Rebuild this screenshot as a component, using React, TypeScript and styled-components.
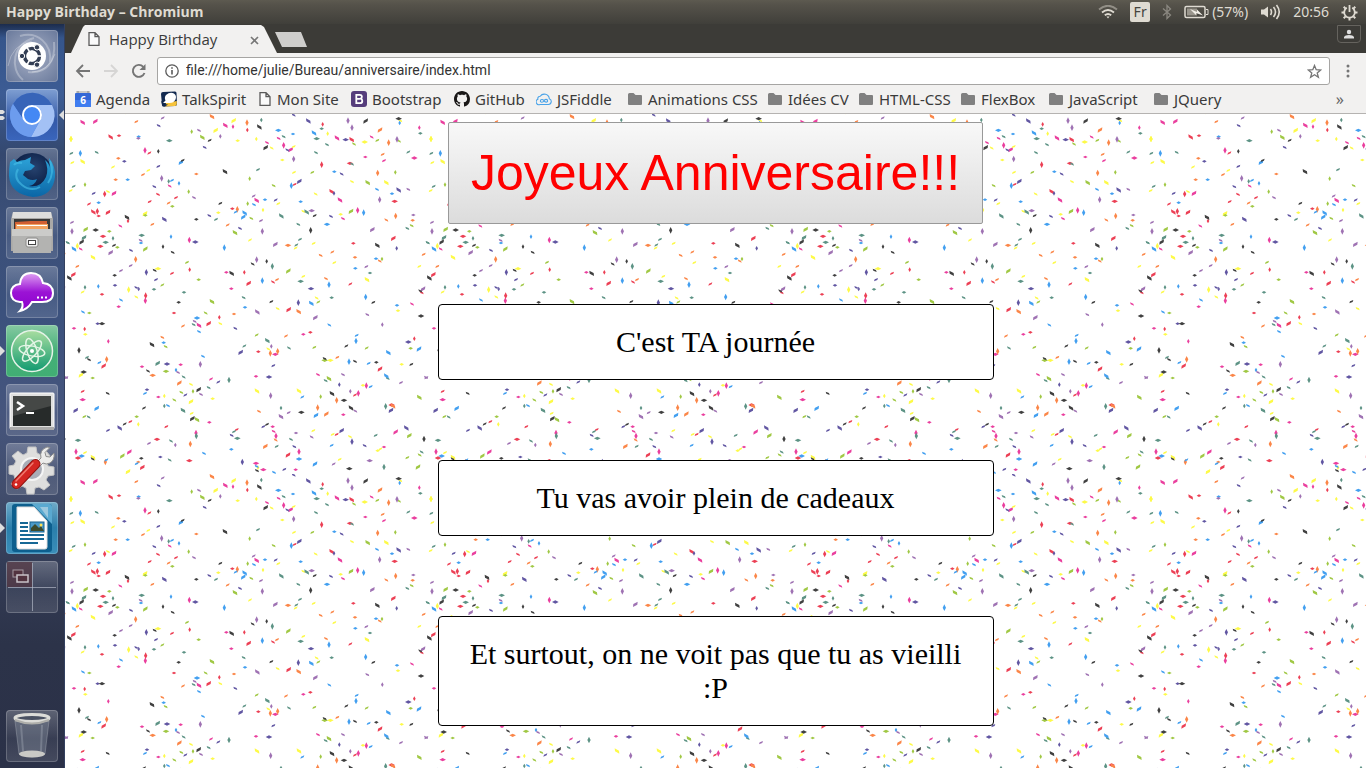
import React from 'react';
import styled, { createGlobalStyle } from 'styled-components';

const uiFont = '"Noto Sans", "Open Sans", sans-serif';

const GlobalStyle = createGlobalStyle`
  *, *::before, *::after { box-sizing: border-box; }
  body { margin: 0; background: #fff; }
  button, input { font: inherit; margin: 0; padding: 0; border: 0; background: none; color: inherit; }
`;

const Desktop = styled.div`
  display: flex;
  flex-direction: column;
  height: 100vh;
  overflow: hidden;
  font-family: ${uiFont};
`;

/* ---------- system panel ---------- */

const Panel = styled.header`
  flex: none;
  display: flex;
  align-items: center;
  justify-content: space-between;
  height: 24px;
  padding: 0 8px 0 6px;
  background: linear-gradient(#5d5a50, #55524a 20%, #403f3a);
  color: #dfdbd2;
  font-size: 14px;
  line-height: 24px;
`;

const WindowTitle = styled.h1`
  margin: 0;
  font-family: "Open Sans", sans-serif;
  font-size: 14px;
  font-weight: 700;
`;

const Indicators = styled.div`
  display: flex;
  align-items: center;
  gap: 12px;
  svg { display: block; }
`;

const Indicator = styled.button`
  display: flex;
  align-items: center;
  gap: 3px;
  height: 24px;
`;

const Keyboard = styled.span`
  width: 20px;
  height: 20px;
  border-radius: 2px;
  background: #dfdbd2;
  color: #45433e;
  font-size: 14px;
  line-height: 20px;
  text-align: center;
`;

const Workspace = styled.div`
  flex: 1;
  min-height: 0;
  display: flex;
`;

/* ---------- launcher ---------- */

const LauncherBar = styled.nav`
  flex: none;
  display: flex;
  flex-direction: column;
  gap: 7px;
  width: 65px;
  padding: 6px 0 6px 6px;
  background: linear-gradient(#1c2c4c, #35558b 14px, #3c5c94 70px, #34486f 130px, #3c5079 200px, #3b517d 290px, #46557d 390px, #414d6c 470px, #333c56 540px, #2c3349 620px, #2b3148);
  border-right: 1px solid #33405f;
`;

const Tile = styled.button<{ $tone?: string; $last?: boolean }>`
  position: relative;
  flex: none;
  width: 52px;
  height: 52px;
  border-radius: 4px;
  background: ${(p) => p.$tone ?? 'linear-gradient(rgba(255,255,255,.24), rgba(255,255,255,.06) 55%, rgba(255,255,255,.12))'};
  box-shadow: inset 0 0 0 1px rgba(255, 255, 255, 0.2);
  margin-top: ${(p) => (p.$last ? 'auto' : '0')};
  svg { display: block; }
`;

const Pip = styled.span<{ $side: 'left' | 'right' }>`
  position: absolute;
  top: 21px;
  ${(p) => (p.$side === 'left' ? 'left: -6px;' : 'right: -6px;')}
`;

/* ---------- browser chrome ---------- */

const Browser = styled.main`
  flex: 1;
  min-width: 0;
  display: flex;
  flex-direction: column;
  color: #3a3a3a;
`;

const TabStrip = styled.div`
  flex: none;
  display: flex;
  align-items: flex-start;
  height: 29px;
  padding: 1px 5px 0 6px;
  background: #3c3b37;
`;

const Tab = styled.div`
  display: flex;
  align-items: center;
  width: 206px;
  height: 28px;
  padding: 0 18px 0 16px;
  background: #f2f1f0;
  clip-path: polygon(0 100%, 12px 2px, 14px 0, 190px 0, 193px 2px, 100% 100%);
  font-size: 15px;
  line-height: 28px;
`;

const TabTitle = styled.span`
  flex: 1;
  margin-left: 8px;
  font-family: "Open Sans", sans-serif;
`;

const NewTab = styled.button`
  width: 32px;
  height: 15px;
  margin: 7px auto 0 -2px;
  background: #cfcecc;
  clip-path: polygon(0 0, 26px 0, 100% 100%, 7px 100%);
`;

const UserButton = styled.button`
  display: grid;
  place-items: center;
  width: 24px;
  height: 18px;
  border: 1px solid #65635e;
  border-radius: 0 0 4px 4px;
`;

const Toolbar = styled.div`
  flex: none;
  display: flex;
  align-items: center;
  height: 36px;
  padding: 0 4px;
  background: #f2f1f0;
`;

const ToolButton = styled.button`
  display: grid;
  place-items: center;
  width: 28px;
  height: 28px;
`;

const AddressBox = styled.label`
  flex: 1;
  display: flex;
  align-items: center;
  gap: 7px;
  height: 28px;
  margin: 0 4px;
  padding: 0 7px;
  border: 1px solid #a6a5a3;
  border-radius: 3px;
  background: #fff;
`;

const AddressInput = styled.input`
  flex: 1;
  min-width: 0;
  height: 26px;
  padding-bottom: 2px;
  outline: 0;
  font-family: Roboto, "Noto Sans", sans-serif;
  font-size: 14px;
  color: #333;
`;

const Bookmarks = styled.nav`
  flex: none;
  display: flex;
  align-items: center;
  height: 25px;
  padding: 0 22px 4px 10px;
  background: #f2f1f0;
  border-bottom: 1px solid #b5b3b1;
  font-size: 15px;
`;

const Bookmark = styled.a<{ $basis: number }>`
  flex: 0 0 ${(p) => p.$basis}px;
  display: flex;
  align-items: center;
  gap: 5px;
  color: inherit;
  text-decoration: none;
  white-space: nowrap;
  line-height: 20px;
  svg { flex: none; }
`;

const More = styled.button`
  margin-left: auto;
  color: #666;
  font-size: 16px;
  line-height: 18px;
`;

/* ---------- web page ---------- */

const Page = styled.section`
  flex: 1;
  min-height: 0;
  display: grid;
  background: #fff;
  > * { grid-area: 1 / 1; }
`;

const ConfettiSheet = styled.svg`
  width: 100%;
  height: 100%;
`;

const Greeting = styled.div`
  display: flex;
  flex-direction: column;
  align-items: center;
  gap: 80px;
  padding: 8px;
  z-index: 1;
`;

const BigButton = styled.button`
  padding: 20px 22px;
  border: 1px solid #999;
  border-radius: 2px;
  background: linear-gradient(#f8f8f8, #dcdcdc);
  color: #f00;
  font-family: "Liberation Sans", Arial, sans-serif;
  font-size: 50px;
  line-height: 60px;
`;

const Message = styled.p`
  box-sizing: content-box;
  width: 40%;
  margin: 0;
  padding: 20px;
  border: 1px solid #000;
  border-radius: 4px;
  background: #fff;
  color: #000;
  font-family: "Liberation Serif", "Times New Roman", serif;
  font-size: 30px;
  line-height: 34px;
  text-align: center;
`;

/* Confetti tile, 1080 units for 360px. Each piece: colour, shape, x, y.
   Shapes: V upright, H flat, F leaning right, B leaning left; lower case is small. */
const PIECES = `
mB50,25 mF88,22 of211,23 pf290,12 oB438,8 yF503,20 oV543,26 tv586,18 kB580,39 ib278,35 mB478,34 mv501,38 yF449,49 gv377,53 pb399,49
yV15,75 rB134,69 rh159,65 bh218,68 ph217,73 tH310,80 gB409,70 kf431,79 pv463,67 ib416,100 yh515,80 rv544,48 mV237,109 rf250,117 kv277,112
tf16,118 bV43,118 tb92,115 yf19,146 yB50,143 oh157,133 ih175,142 bF345,145 kf350,139 yf141,159 yf247,169 if277,157 of231,182 oh391,180 kB477,173
oh149,197 bh185,197 pV287,193 tv308,202 bf318,199 bv339,208 mb311,216 ib265,218 tf23,217 gv57,212 yf14,230 if83,238 rV116,240 yb126,233 mF144,238
rb276,241 gv368,233 rf330,251 pb384,251 rf251,263 of308,267 gh319,277 rf69,270 bh98,266 rB82,294 rV94,292 rF126,295 rh98,306 yF237,299 gh238,304
kB183,310 rv186,321 iB295,316 of259,331 kf463,268 yh457,296 ib430,305 tf450,316 kh391,316 mb163,336 pf18,325 pV18,352 gF59,346 kH89,348 gh130,352
tF54,371 kF47,384 rH111,367 tH119,385 rH103,397 tv141,373 kf144,394 gh154,400 pF134,416 bB24,405 yV34,396 mb44,405 tb5,386 yB81,430 tH227,364
pb224,379 bh225,387 gF238,405 bv315,368 mV370,378 iH388,384 kv291,398 kb320,415 ib195,409 oV209,436 gf363,445 rv371,467 bV475,401 of485,333
of34,457 rF22,482 kB10,492 pf194,455 pf165,470 kh146,484 iV241,475 kb266,469 yH276,464 if270,497 rf318,478 gh398,497 mh481,475 kB497,478
tv57,520 bv97,517 yf50,534 ih147,514 rh108,541 gf289,513 th264,526 yV188,527 ib211,521 iv218,525 rV239,545 mV238,560 yb211,549 bb165,558
mh158,578 th354,535 kh338,565 bb51,594 gh70,597 gB438,563 rh324,597 gb419,597 bH393,612 pb386,622 tb383,632 mB399,634 rF428,629 rv460,610 yb463,629
oh504,600 ib508,643 kH108,629 ih95,629 mh24,643 rv56,645 yh58,661 mv127,682 of351,636 bb399,653 ob289,670 bh293,686 kB258,692 gb299,698
kV39,709 tf63,730 kb69,737 oV122,736 bf100,746 rF113,756 kH53,774 yF45,783 gh80,792 tF275,748 iH303,750 mh344,752 gH300,772 mh228,758 kb246,771
oH260,784 bv330,768 pb336,775 tb353,789 pV403,751 bb411,727 oF340,807 yb375,811 kF398,827 gb346,835 gv381,832 if358,843 pb405,841 tb428,821
mf435,795 if457,804 tV489,798 ih243,827 bf237,838 mh277,849 yv295,846 gb325,858 yF375,863 yh440,854 rf50,832 kb125,838 mH50,857 iF29,889 bF92,883
kf234,882 tv295,876 bb306,875 tB351,889 pf1,791
bH637,49 tb653,68 yv571,75 bh681,60 mb638,73 mb603,86 kF599,101 yb617,102 mV653,94 mF674,107 ib664,108 yf683,98 pV683,135 yh649,138 tf576,167 gv551,194
gb623,215 yf684,175 bV676,215 rf686,211 iF700,202 pf563,246 mB572,259 bh597,257 if629,258 bb564,272 gv545,269 yf637,269 yv591,288 rh499,284 oV514,286
bf509,294 bB536,297 bF532,309 gb556,313 pf585,320 tB646,306 bh704,263 yb712,292 tB722,294 ib522,343 gB507,356 pV589,352 yf552,378 pF628,391
oH666,394 tf691,393 tf702,376 yf689,402 tb697,331 kV734,349 yf743,388 pV572,437 kb560,450 kv602,442 tV619,457 gF667,471 rv535,475 rF548,508
bV589,500 rb621,504 of633,497 mh496,524 tb533,551 bh537,580 pB574,594 kf616,563 yb635,584 rF668,587 oB698,593 iV697,566 yf712,487 tH704,502 iH735,524
iB727,21 rv770,31 th767,44 bB744,57 tH752,74 tb783,92 tb750,116 rV767,152 gf739,175 yb749,240 yv785,59 bh805,173 ib827,180 rB797,233 iv804,238
pV846,20 pV858,41 kF899,21 iH839,77 rB857,77 gb864,90 mB813,72 yH896,84 mb917,69 gf934,79 oF942,48 oV968,86 pV993,76 gb999,81 kH998,14 bv1001,27 yb1003,20
rH852,148 tb858,150 mh898,129 of950,121 mf954,140 oV935,177 gv988,175 gB905,206 yB961,206 yb858,203 iB998,228 bh978,239 bb933,226 pV941,257 rH986,262
mB822,258 pH737,290 kf746,305 ib795,307 yh824,301 mb831,314 bH783,331 gF855,292 mV875,289 bV893,296 oV989,306 ob961,318 pF919,347 rF982,373
kB934,394 iv992,403 rh862,388 of799,414 ob764,424 yf805,446 oh867,430 bh868,463 bh930,434 ob941,441 gv948,435 pf901,458 th912,477 yB903,497
ob780,494 bV789,512 rf853,510 bV899,549 kf922,565 th797,551 yb752,552 gf757,564 bB736,568 pF748,611 bb790,633 bh993,574 yh996,590 pb904,602
pv949,632 rh733,655 mh712,661 of660,666 gf572,663 tB604,680 tf535,696 iF524,715 rh577,713 pv616,697 yb607,705 oV613,718 oV635,712 mH628,721 tb669,702
if622,755 mh570,787 iH609,789 yB573,831 pV614,845 tv645,882 gf745,700 kf841,696 bV870,681 bf872,664 gf902,702 bB967,716 kb776,734
gH776,739 yH793,739 of814,730 bV849,743 kb867,742 bf908,748 kh931,745 rF942,765 bB961,786 tb965,793 mb756,782 gB789,794 tb779,800 pb831,782
iv820,812 mV901,815 yh891,814 bf914,818 mV877,838 rf867,843 pv853,832 kB798,839 oV812,859 kH834,859 yB699,831 bf709,849 gv764,848 oV755,881
kB855,882 pb868,891 tV959,877 rH977,873 oB981,876 iF975,889 kH706,895 ib683,3
mv1060,41 th1063,58 yV1095,75 tf1027,114 mH1045,132 pb1027,226 ph1042,303 oh1040,319 gb1037,335 tb1024,343 tb1085,386 of1073,421 yf1060,457 kb1090,493 pF1071,525 kb1063,531 rb1067,536
mb1038,570 kH1065,606 iH1027,684 rv1045,674 gh1034,703 bF1059,705 yh1007,751 kf1036,751 pf1005,806 pb1080,790 gB1060,850 iB1021,942 gF1030,965 kV1074,975 tb1067,1014
gf55,908 tb68,909 if126,949 iB161,942 kf176,930 rf193,923 gh212,908 yv217,931 rf301,938 yf377,898 kF379,914 gB393,917 mh430,925 ob579,892
pB645,908 pf668,896 bF750,904 oF781,900 mh832,902 kf603,931 if592,938 mh620,938 mb623,952 mV630,966 ob629,978 rf512,947 tf504,953 ib497,964 tH514,973
yf742,950 ph690,957 pb737,969 yf800,961 rf812,961 iF827,950 yb852,968 iV858,983 ib896,995 mF989,954 tf929,964
tH36,979 mV30,1013 yf57,1016 rH36,1032 bH47,1026 yB81,1030 kb80,1035 oV118,1044 bf121,1038 gF169,1026 mF190,1014 pf249,988 rH273,976 tb315,981 pv328,993 mV390,957 tV391,966 oV373,990
bb414,1018 kh226,1033 oh217,1044 bf212,1049 rF229,1060 yF186,1073 ih283,1029 tb311,1038 rH370,1040 bh496,1006 iV529,1044 oF598,997 tf632,997 tb675,976 ib685,998 mV699,1013 rF666,1023 bH699,1035
mH570,1048 yv576,1061 bb572,1057 kb573,1070 mH592,1067 bb624,1075 if655,1066 mh689,1067 bF747,1050 bf797,994 yf821,1036 pf803,1050 kH850,1064 pH911,1040 yh935,1010 yf943,1005 mh954,999 tV954,1059
iB1021,942 gF1030,965 gf1024,1031 gb1061,1023 gF1056,1059
`.trim().split(/\s+/);

const CONFETTI_COLOURS: Record<string, string> = {
  m: '#ea3f9e', r: '#ec4055', o: '#fb8648', y: '#fdfa48', g: '#a0c844',
  t: '#5d9385', b: '#429ff0', i: '#6156a2', p: '#9f72b3', k: '#404040',
};

const SHAPES: Record<string, string> = {
  V: 'm0-10l5 10l-5 10l-5-10z', v: 'm0-7l4 7l-4 7l-4-7z',
  H: 'm-10 0l10-5l10 5l-10 5z', h: 'm-7 0l7-4l7 4l-7 4z',
  F: 'm7-8l-1 9l-13 7l1-9z', f: 'm6-5l-2 6l-10 4l2-6z',
  B: 'm-7-8l1 9l13 7l-1-9z', b: 'm-6-5l2 6l10 4l-2-6z',
};

const confettiPaths = Object.keys(CONFETTI_COLOURS).map((key) => ({
  fill: CONFETTI_COLOURS[key],
  d: PIECES.filter((p) => p[0] === key).map((p) => 'M' + p.slice(2) + SHAPES[p[1]]).join(''),
}));

const Confetti = () => (
  <ConfettiSheet aria-hidden="true">
    <defs>
      <pattern id="confetti" x="1" y="0" width="360" height="360" patternUnits="userSpaceOnUse">
        <g transform="scale(.33333)">
          {[[0, 0], [-1080, 0], [1080, 0], [0, -1080]].map(([x, y]) => (
            <g key={`${x},${y}`} transform={`translate(${x} ${y})`}>
              {confettiPaths.map((c) => <path key={c.fill} fill={c.fill} d={c.d} />)}
            </g>
          ))}
        </g>
      </pattern>
    </defs>
    <rect width="100%" height="100%" fill="url(#confetti)" />
  </ConfettiSheet>
);

/* ---------- drawings ---------- */

const Doc = () => (
  <svg width="14" height="16" viewBox="0 0 14 16" fill="#fafafa" stroke="#5a5a5a" strokeWidth="1.3">
    <path d="M2 1.7h6l4 4v8.6H2zM8 1.7v4h4" />
  </svg>
);

const Folder = () => (
  <svg width="15" height="14" viewBox="0 0 15 14">
    <path d="M0 2.5A1.5 1.5 0 0 1 1.5 1h4l2 2H13a1 1 0 0 1 1 1v8a1 1 0 0 1-1 1H1a1 1 0 0 1-1-1z" fill="#808080" />
  </svg>
);

const Calendar = () => (
  <svg width="16" height="16" viewBox="0 0 16 16">
    <rect x="1" width="14" height="4" fill="#c9c9c9" /><path d="M3 0v2M13 0v2" stroke="#888" />
    <rect y="2" width="16" height="14" rx="1" fill="#3367d6" /><path d="M0 9h16v6a1 1 0 0 1-1 1H1a1 1 0 0 1-1-1z" fill="#3f7df0" />
    <text x="8" y="13" fill="#fff" fontSize="10" fontWeight="700" textAnchor="middle" fontFamily="Open Sans, sans-serif">6</text>
  </svg>
);

const TalkSpirit = () => (
  <svg width="16" height="16" viewBox="0 0 16 16">
    <path d="M2 1L14 .5q1.500 0 1.500 1.500L16 13q0 2-2 2L3 15.500q-2 0-2-2L0 3q0-2 2-2z" fill="#12294f" />
    <path d="M5 12q5-1 10.800-2v3q0 2-2 2L4 15.500z" fill="#f6c33b" />
    <path d="M5 4q4-3.500 8-1.500q3 2 1.500 6q-2 4-7 3.500L2 12l2.500-2.500q-1.500-3 .5-5.500z" fill="#fff" />
    <path d="M0 9.500l3 3.500 4 .5-3 2H2.500Q1 15.500 1 14z" fill="#12294f" />
  </svg>
);

const Bootstrap = () => (
  <svg width="16" height="16" viewBox="0 0 16 16">
    <rect width="16" height="16" rx="3" fill="#563d7c" />
    <path d="M5.300 3.800h3.400q2.200 0 2.200 2q0 1.400-1.300 1.900q1.700.4 1.700 2.200q0 2.300-2.600 2.300H5.300zM5.300 7.800h3.500" fill="none" stroke="#fff" strokeWidth="1.800" />
  </svg>
);

const GitHub = () => (
  <svg width="16" height="16" viewBox="0 0 16 16" fill="#191717">
    <path d="M8 0C3.580 0 0 3.580 0 8c0 3.540 2.290 6.530 5.470 7.590.4.070.55-.17.55-.38 0-.19-.01-.82-.01-1.490-2.010.37-2.530-.49-2.690-.94-.09-.23-.48-.94-.82-1.130-.28-.15-.68-.52-.01-.53.63-.01 1.080.58 1.230.82.72 1.210 1.870.87 2.330.66.07-.52.28-.87.51-1.070-1.780-.2-3.640-.89-3.640-3.950 0-.87.31-1.590.82-2.150-.08-.2-.36-1.020.08-2.120 0 0 .67-.21 2.200.82.64-.18 1.320-.27 2-.27s1.360.09 2 .27c1.530-1.040 2.200-.82 2.200-.82.44 1.100.16 1.920.08 2.120.51.56.82 1.270.82 2.150 0 3.070-1.870 3.750-3.650 3.950.29.25.54.73.54 1.480 0 1.070-.01 1.930-.01 2.200 0 .21.15.46.55.38A8 8 0 0 0 16 8c0-4.420-3.580-8-8-8z" />
  </svg>
);

const JSFiddle = () => (
  <svg width="16" height="14" viewBox="0 0 16 14" fill="none" stroke="#4aa3e8" strokeWidth="1.100">
    <path d="M4 12.500h8.500a3 3 0 0 0 .8-5.800A5 5 0 0 0 4.200 4.300a2.300 2.300 0 0 0-2.300 3A2.800 2.800 0 0 0 4 12.500z" />
    <path d="M8 8.700c-1-1.600-3.600-1.600-3.600.2s2.600 1.800 3.600-.2s3.600-1.600 3.600.2s-2.600 1.600-3.600-.2z" />
  </svg>
);

const bookmarks = [
  { label: 'Agenda', icon: <Calendar />, basis: 86 },
  { label: 'TalkSpirit', icon: <TalkSpirit />, basis: 97 },
  { label: 'Mon Site', icon: <Doc />, basis: 93 },
  { label: 'Bootstrap', icon: <Bootstrap />, basis: 103 },
  { label: 'GitHub', icon: <GitHub />, basis: 82 },
  { label: 'JSFiddle', icon: <JSFiddle />, basis: 92 },
  { label: 'Animations CSS', icon: <Folder />, basis: 140 },
  { label: 'Idées CV', icon: <Folder />, basis: 91 },
  { label: 'HTML-CSS', icon: <Folder />, basis: 102 },
  { label: 'FlexBox', icon: <Folder />, basis: 88 },
  { label: 'JavaScript', icon: <Folder />, basis: 105 },
  { label: 'JQuery', icon: <Folder />, basis: 80 },
];

const Art = ({ children }: { children: React.ReactNode }) => (
  <svg width="52" height="52" viewBox="0 0 52 52" aria-hidden="true">{children}</svg>
);

const Dash = () => (
  <Art>
    <g fill="none" stroke="#fff" strokeOpacity=".28">
      <path d="M17 50C3 38 7 14 28 8M48 12c2 20-8 32-26 30M14 6c18-5 32 8 30 26" strokeWidth="2" />
      <path d="M2 36Q6 14 26 11M49 24Q42 42 26 42" />
    </g>
    <circle cx="26" cy="26" r="14" fill="#fff" />
    <circle cx="26" cy="26" r="7.500" fill="none" stroke="#333e54" strokeWidth="3.500" />
    <path d="M26 26h11M26 26l-5.500-9.500M26 26l-5.500 9.500" stroke="#fff" strokeWidth="1.500" />
    <circle cx="26" cy="26" r="5.500" fill="#fff" />
    <g fill="#333e54" stroke="#fff" strokeWidth="1"><circle cx="16" cy="26" r="2.700" /><circle cx="31" cy="17.300" r="2.700" /><circle cx="31" cy="34.700" r="2.700" /></g>
  </Art>
);

const Chromium = () => (
  <Art>
    <circle cx="26" cy="26" r="22" fill="#5c8ee6" />
    <path d="M7 15A22 22 0 0 1 46 16H26a10 10 0 0 0-9 14z" fill="#3764b8" />
    <path d="M46 16A22 22 0 0 1 25 48L35 30a10 10 0 0 0-9-14z" fill="#a3c1f5" />
    <path d="M7 15A22 22 0 0 0 25 48l8-15a10 10 0 0 1-16-3z" fill="#6c9cee" />
    <circle cx="26" cy="26" r="9" fill="#4488f4" stroke="#fff" strokeWidth="2" />
  </Art>
);

const Firefox = () => (
  <Art>
    <defs>
      <radialGradient id="fx" cx=".55" cy=".35"><stop offset="0" stopColor="#27436f" /><stop offset="1" stopColor="#0a1d44" /></radialGradient>
      <linearGradient id="fox" x1="0" y1="0" x2="0" y2="1"><stop offset="0" stopColor="#2da3d8" /><stop offset="1" stopColor="#0b66a6" /></linearGradient>
    </defs>
    <circle cx="26" cy="26" r="21" fill="url(#fx)" />
    <path d="M4 14L8 11l3 3q4-2 8-2l6-3-1 6 5 3-4 4-6 1-2 4 5 4q5 2 9 0-2 6-8 7 12 2 17-9 3-8-1-17 4 3 5 8l-1-10q7 9 6 19-2 19-22 20Q4 46 3 28 3 20 4 14z" fill="url(#fox)" />
    <path d="M12 21q-5 9 4 16t18 2M44 13q5 12-2 22M8 17q2-3 8-2" fill="none" stroke="#48bfe8" strokeWidth="2" strokeOpacity=".6" />
  </Art>
);

const Files = () => (
  <Art>
    <path d="M7 5h38l2 7v32H5V12z" fill="#aaa9a7" /><path d="M7 5h38l1 6H6z" fill="#dededd" />
    <path d="M8 12h36v12H8z" fill="#393939" /><path d="M9 15l16-1 16 0v8H9z" fill="#d15e32" /><path d="M10 17h32v7H10z" fill="#f1a462" /><path d="M11 18.500h30" stroke="#fff" />
    <path d="M6 22h40l-1 24H7z" fill="#b3b3b1" /><path d="M6 22h40v7H6z" fill="#cbcbc9" />
    <rect x="20" y="31" width="12" height="9" rx="2" fill="#eee" stroke="#8b8a88" /><rect x="22.500" y="33.500" width="7" height="4" fill="#fff" stroke="#444" />
  </Art>
);

const Chat = () => (
  <Art>
    <defs>
      <linearGradient id="cloud" x1="0" y1="0" x2="0" y2="1"><stop offset="0" stopColor="#dfa0f2" /><stop offset=".5" stopColor="#9b13d5" /><stop offset="1" stopColor="#8c00cd" /></linearGradient>
    </defs>
    <path d="M14 36Q5 35 5 27t9-9q1-11 11-11 10 0 12 10 10 1 10 10 0 9-11 9H26q-4 7-12 9 4-4 2-9z" fill="url(#cloud)" stroke="#fff" strokeWidth="2" />
    <path d="M31 31.500h2M35 31.500h2M39 31.500h2" stroke="#fff" strokeWidth="2" />
  </Art>
);

const Atom = () => (
  <Art>
    <defs>
      <linearGradient id="atom" x1="0" y1="0" x2="0" y2="1"><stop offset="0" stopColor="#a8dda0" /><stop offset="1" stopColor="#119a70" /></linearGradient>
    </defs>
    <circle cx="26" cy="26" r="20.500" fill="url(#atom)" stroke="#e6f3e8" strokeWidth="1.500" />
    <g fill="none" stroke="#e4f5e6" strokeWidth="1.500">
      <ellipse cx="26" cy="26" rx="13" ry="5" transform="rotate(12 26 26)" />
      <ellipse cx="26" cy="26" rx="13" ry="5" transform="rotate(72 26 26)" />
      <ellipse cx="26" cy="26" rx="13" ry="5" transform="rotate(-48 26 26)" />
    </g>
    <circle cx="26" cy="26" r="2" fill="#fff" />
  </Art>
);

const Terminal = () => (
  <Art>
    <rect x="4" y="9" width="44" height="36" rx="1" fill="#e0e0df" stroke="#fff" /><rect x="4" y="43" width="44" height="3" fill="#aaa" />
    <rect x="7" y="12" width="38" height="30" fill="#272b2a" /><path d="M7 12h38v10L7 32z" fill="#454846" />
    <path d="M11 18l6 4-6 4" fill="none" stroke="#fff" strokeWidth="2.500" /><path d="M20 29h8" stroke="#fff" strokeWidth="2" />
  </Art>
);

const Settings = () => (
  <Art>
    <path d="M22 4h8l1 6 4 2 5-4 5 6-4 5 1 4 6 1v8l-6 1-2 4 4 5-6 5-5-3-4 1-1 6h-7l-1-6-4-2-5 3-6-5 4-5-1-4-5-1v-8l5-1 2-4-4-5 6-5 5 4 4-2z" fill="#dededd" stroke="#c4c4c4" />
    <circle cx="26" cy="26" r="11" fill="#a9adb7" stroke="#f5f5f5" strokeWidth="2" />
    <path d="M28 22l7-7q-2-8 6-11l3 .5-5 5 1 4 4 .5 4-4q1 7-4 10-4 2-7 0l-6 6z" fill="#ececeb" stroke="#8d8d8d" />
    <path d="M9 41L28 21" stroke="#8f1412" strokeWidth="10" strokeLinecap="round" transform="translate(1.500 0)" />
    <path d="M9 41L28 21" stroke="#d42622" strokeWidth="8" strokeLinecap="round" transform="translate(1.500 0)" />
    <path d="M10 38l17-18" stroke="#f07a70" strokeWidth="1.500" strokeLinecap="round" />
    <circle cx="10" cy="41.500" r="1.300" fill="#fff" />
  </Art>
);

const Writer = () => (
  <Art>
    <rect x="6" y="2" width="40" height="48" rx="3" fill="#0d5f8e" /><path d="M26 2h17q3 0 3 3v17z" fill="#5aa9d0" />
    <path d="M11 5h17l13 14v26q0 2-2 2H13q-2 0-2-2z" fill="#fff" stroke="#dedede" /><path d="M34 5h8v11z" fill="#9cc8de" />
    <g stroke="#176895" strokeWidth="2"><path d="M14 21h8M14 25h8M14 29h8M14 33h24M14 37h24M14 41h18" /></g>
    <rect x="24" y="20" width="14" height="10" fill="#4a99c8" stroke="#17608c" /><path d="M25 29v-3l4-4 4 4 2-2 3 5z" fill="#3d4a2c" /><circle cx="35" cy="23" r="1.500" fill="#fde050" />
  </Art>
);

const Switcher = () => (
  <Art>
    <path d="M1 1h25v25H1z" fill="#52333f" fillOpacity=".7" />
    <path d="M26.500 2v48M2 26.500h48" stroke="#b9bfcc" strokeOpacity=".65" />
    <g fill="#52333f" stroke="#c9c3c9"><rect x="7" y="9" width="10" height="7" strokeOpacity=".7" /><rect x="11" y="14" width="11" height="7" strokeWidth="1.500" /></g>
  </Art>
);

const Trash = () => (
  <Art>
    <path d="M9 11l4 33q13 6 26 0l4-33z" fill="#7f8897" fillOpacity=".45" stroke="#aab0ba" strokeOpacity=".4" />
    <ellipse cx="26" cy="44" rx="13" ry="3.500" fill="#c9c9c5" /><path d="M15 15l2 26M36 15l-1 26" stroke="#b9c0ca" strokeOpacity=".3" strokeWidth="2" />
    <ellipse cx="26" cy="8" rx="17" ry="3.500" fill="#4a5162" stroke="#dcdcd8" strokeWidth="3" /><path d="M9 10q17 7 34 0" fill="none" stroke="#aeaeaa" strokeWidth="2" />
  </Art>
);

const launcherItems: { name: string; art: React.ReactNode; tone?: string; left?: number; right?: boolean; last?: boolean }[] = [
  { name: 'Dash', art: <Dash />, tone: 'radial-gradient(#a7b0c6, #68789a)' },
  { name: 'Chromium', art: <Chromium />, tone: 'linear-gradient(#7f9fd2, #3359a8 60%, #3a66bd)', left: 2, right: true },
  { name: 'Firefox', art: <Firefox /> },
  { name: 'Files', art: <Files /> },
  { name: 'Messages', art: <Chat /> },
  { name: 'Atom', art: <Atom />, tone: 'linear-gradient(#86c9a2, #45b078 50%, #41ae74)', left: 1 },
  { name: 'Terminal', art: <Terminal /> },
  { name: 'System Settings', art: <Settings /> },
  { name: 'Writer', art: <Writer />, tone: 'linear-gradient(#70abc9, #2a7eab 50%, #3b8fba)', left: 1 },
  { name: 'Workspaces', art: <Switcher /> },
  { name: 'Trash', art: <Trash />, last: true },
];

const Wifi = () => (
  <svg width="20" height="14" viewBox="0 0 20 14" fill="none" stroke="#dfdbd2" strokeWidth="1.800">
    <path d="M1 4.500q9-7.500 18 0" strokeOpacity=".45" /><path d="M4 7.500q6-5 12 0M6.800 10.300q3.200-2.600 6.400 0" /><path d="M8.500 11.500h3L10 13.500z" fill="#dfdbd2" stroke="none" />
  </svg>
);

const Bluetooth = () => (
  <svg width="10" height="16" viewBox="0 0 10 16" fill="none" stroke="#8b8881" strokeWidth="1.300"><path d="M1 4.500l7.500 6.500L5 14.500v-13L8.500 5 1 11.500" /></svg>
);

const Battery = () => (
  <svg width="25" height="14" viewBox="0 0 25 14">
    <rect x="1" y="1.500" width="20" height="11" rx="1.500" fill="none" stroke="#dfdbd2" strokeWidth="1.500" /><path d="M22 4.500h2v5h-2" fill="none" stroke="#dfdbd2" />
    <rect x="3" y="3.500" width="10" height="7" fill="#99958c" /><path d="M6 4l7 3V4.500l6 6-7-2.500V10z" fill="#f2efe8" />
  </svg>
);

const Sound = () => (
  <svg width="21" height="16" viewBox="0 0 21 16" fill="none" stroke="#dfdbd2" strokeWidth="1.600">
    <path d="M1 5.500h3l4-3v11l-4-3H1z" fill="#dfdbd2" stroke="none" /><path d="M10.500 5q2 3 0 6M13.500 3q4 5 0 10M16.500 1q5.500 7 0 14" />
  </svg>
);

const Session = () => (
  <svg width="17" height="17" viewBox="0 0 17 17" fill="none" stroke="#dfdbd2">
    <path d="M5.800 3.800a5.300 5.300 0 1 0 5.400 0" strokeWidth="1.800" /><path d="M8.500 1v7" strokeWidth="1.800" />
    <path d="M.5 8.500h2.500M14 8.500h2.500M2.700 2.700l1.900 1.900M14.300 2.700l-1.900 1.900M2.700 14.300l1.900-1.900M14.300 14.300l-1.900-1.900M8.500 14v2.500" strokeWidth="2" />
  </svg>
);

const App = () => (
  <>
    <GlobalStyle />
    <Desktop>
      <Panel>
        <WindowTitle>Happy Birthday – Chromium</WindowTitle>
        <Indicators>
          <Indicator aria-label="Network"><Wifi /></Indicator>
          <Indicator aria-label="Keyboard layout"><Keyboard>Fr</Keyboard></Indicator>
          <Indicator aria-label="Bluetooth"><Bluetooth /></Indicator>
          <Indicator aria-label="Battery"><Battery />(57%)</Indicator>
          <Indicator aria-label="Sound"><Sound /></Indicator>
          <Indicator>20:56</Indicator>
          <Indicator aria-label="Session"><Session /></Indicator>
        </Indicators>
      </Panel>

      <Workspace>
        <LauncherBar aria-label="Launcher">
          {launcherItems.map((item) => (
            <Tile key={item.name} aria-label={item.name} $tone={item.tone} $last={item.last}>
              {item.art}
              {item.left && (
                <Pip $side="left">
                  <svg width="5" height="10" viewBox="0 0 5 10" fill="#dedede">
                    {item.left === 1 ? <path d="M0 0l5 5-5 5z" /> : <path d="M0 0h3l2 2-2 2H0zM0 6h3l2 2-2 2H0z" />}
                  </svg>
                </Pip>
              )}
              {item.right && (
                <Pip $side="right"><svg width="5" height="10" viewBox="0 0 5 10"><path d="M5 0v10L0 5z" fill="#dedede" /></svg></Pip>
              )}
            </Tile>
          ))}
        </LauncherBar>

        <Browser>
          <TabStrip>
            <Tab>
              <Doc />
              <TabTitle>Happy Birthday</TabTitle>
              <button aria-label="Close tab"><svg width="9" height="9" viewBox="0 0 9 9" stroke="#777" strokeWidth="1.600"><path d="M1 1l7 7M8 1L1 8" /></svg></button>
            </Tab>
            <NewTab aria-label="New tab" />
            <UserButton aria-label="Profile">
              <svg width="10" height="10" viewBox="0 0 10 10" fill="#dedede"><circle cx="5" cy="3" r="2.200" /><path d="M0 9.500V8q1-2 5-2t5 2v1.500z" /></svg>
            </UserButton>
          </TabStrip>

          <Toolbar>
            <ToolButton aria-label="Back"><svg width="16" height="16" viewBox="0 0 16 16" fill="none" stroke="#757575" strokeWidth="1.800"><path d="M15 8H2.500M8 2L2 8l6 6" /></svg></ToolButton>
            <ToolButton aria-label="Forward"><svg width="16" height="16" viewBox="0 0 16 16" fill="none" stroke="#d6d5d4" strokeWidth="1.800"><path d="M1 8h12.500M8 2l6 6-6 6" /></svg></ToolButton>
            <ToolButton aria-label="Reload"><svg width="16" height="16" viewBox="0 0 16 16" fill="none" stroke="#757575" strokeWidth="1.900"><path d="M13.500 10A6 6 0 1 1 12.300 3.800" /><path d="M14.500 1v6h-6z" fill="#757575" stroke="none" /></svg></ToolButton>
            <AddressBox>
              <svg width="14" height="14" viewBox="0 0 14 14" fill="none" stroke="#5a5a5a" strokeWidth="1.300"><circle cx="7" cy="7" r="6.200" /><path d="M7 6v4.500M7 3.200v1.600" strokeWidth="1.600" /></svg>
              <AddressInput aria-label="Address" defaultValue="file:///home/julie/Bureau/anniversaire/index.html" />
              <svg width="15" height="15" viewBox="0 0 15 15" fill="none" stroke="#757575" strokeWidth="1.300"><path d="M7.500 1.500l1.700 4.200 4.500.3-3.500 2.900 1.200 4.400-3.900-2.500-3.900 2.500 1.200-4.400L1.300 6l4.500-.3z" /></svg>
            </AddressBox>
            <ToolButton aria-label="Menu">
              <svg width="4" height="14" viewBox="0 0 4 14" fill="#757575"><circle cx="2" cy="2" r="1.500" /><circle cx="2" cy="7" r="1.500" /><circle cx="2" cy="12" r="1.500" /></svg>
            </ToolButton>
          </Toolbar>

          <Bookmarks aria-label="Bookmarks">
            {bookmarks.map((b) => (
              <Bookmark key={b.label} href="#" $basis={b.basis}>{b.icon}{b.label}</Bookmark>
            ))}
            <More aria-label="More bookmarks">»</More>
          </Bookmarks>

          <Page>
            <Confetti />
            <Greeting>
              <BigButton>Joyeux Anniversaire!!!</BigButton>
              <Message>C'est TA journée</Message>
              <Message>Tu vas avoir plein de cadeaux</Message>
              <Message>Et surtout, on ne voit pas que tu as vieilli :P</Message>
            </Greeting>
          </Page>
        </Browser>
      </Workspace>
    </Desktop>
  </>
);

export default App;
